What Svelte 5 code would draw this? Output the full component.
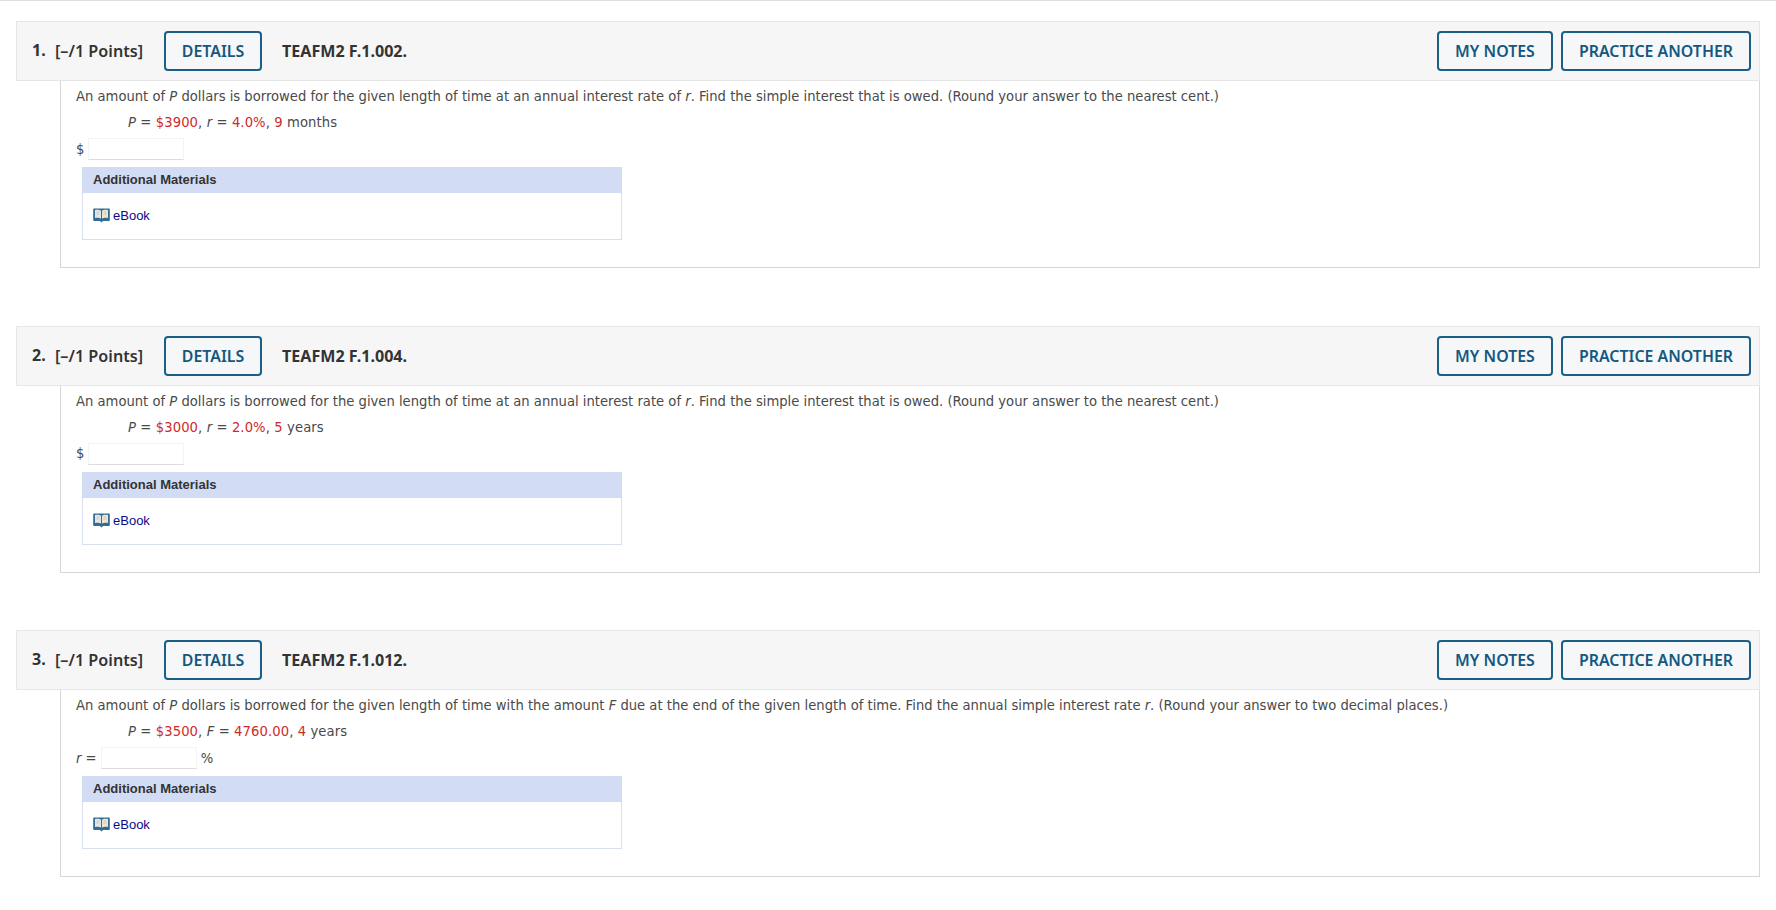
<script>
  // Three homework questions, same layout each
  const questions = [
    {
      num: 1,
      code: "TEAFM2 F.1.002.",
      kind: "interest",
      vals: ["$3900", "4.0%", "9"],
      unit: "months",
    },
    {
      num: 2,
      code: "TEAFM2 F.1.004.",
      kind: "interest",
      vals: ["$3000", "2.0%", "5"],
      unit: "years",
    },
    {
      num: 3,
      code: "TEAFM2 F.1.012.",
      kind: "rate",
      vals: ["$3500", "4760.00", "4"],
      unit: "years",
    },
  ];
</script>

<div class="page">
  {#each questions as q}
    <section class="question">
      <header class="head">
        <span class="num">{q.num}.</span>
        <span class="points">[–/1 Points]</span>
        <button class="btn details">DETAILS</button>
        <span class="code">{q.code}</span>
        <div class="spacer"></div>
        <button class="btn notes">MY NOTES</button>
        <button class="btn practice">PRACTICE ANOTHER</button>
      </header>

      <div class="body">
        {#if q.kind === "interest"}
          <p class="prompt">An amount of <i>P</i> dollars is borrowed for the given length of time at an annual interest rate of <i>r</i>. Find the simple interest that is owed. (Round your answer to the nearest cent.)</p>
          <p class="given"><i>P</i> = <span class="red">{q.vals[0]}</span>, <i>r</i> = <span class="red">{q.vals[1]}</span>, <span class="red">{q.vals[2]}</span> {q.unit}</p>
          <div class="answer"><span>$</span><input type="text" /></div>
        {:else}
          <p class="prompt">An amount of <i>P</i> dollars is borrowed for the given length of time with the amount <i>F</i> due at the end of the given length of time. Find the annual simple interest rate <i>r</i>. (Round your answer to two decimal places.)</p>
          <p class="given"><i>P</i> = <span class="red">{q.vals[0]}</span>, <i>F</i> = <span class="red">{q.vals[1]}</span>, <span class="red">{q.vals[2]}</span> {q.unit}</p>
          <div class="answer"><span><i>r</i> =</span><input type="text" /><span class="pct">%</span></div>
        {/if}

        <div class="materials">
          <div class="mat-title">Additional Materials</div>
          <div class="mat-body">
            <svg width="17" height="15" viewBox="0 0 17 15" aria-hidden="true">
              <path d="M1 .5h15a.8.8 0 0 1 .8.8v10.9a.8.8 0 0 1-.8.8H10l-1.5 1.6L7 13H1a.8.8 0 0 1-.8-.8V1.3A.8.8 0 0 1 1 .5z" fill="#356c94" />
              <path d="M2 2c2-.5 4.6-.3 6 .7v7.8C6.6 9.7 4 9.5 2 9.9z" fill="#dfe8ee" />
              <path d="M15 2c-2-.5-4.6-.3-6 .7v7.8c1.400-.8 4-1 6-.6z" fill="#efe6d0" />
              <path d="M3.500 4h3M3.500 6h3M10.500 4h3M10.500 6h3" stroke="#c9bfa8" stroke-width=".8" />
            </svg>
            <a href="#ebook">eBook</a>
          </div>
        </div>
      </div>
    </section>
  {/each}
</div>

<style>
  :global(body) {
    background: #fff;
  }

  .page {
    border-top: 1px solid #dedede;
    padding: 20px 16px 0;
    font-family: "DejaVu Sans", Verdana, sans-serif;
    color: #4a4a4a;
  }

  .question {
    margin-bottom: 57.5px;
  }

  .head {
    display: flex;
    align-items: center;
    height: 60px;
    box-sizing: border-box;
    background: #f6f6f6;
    border: 1px solid #e6e6e6;
    padding: 0 8px 0 15px;
    font-family: "Noto Sans", "Open Sans", sans-serif;
    font-weight: 700;
    font-size: 16px;
    color: #333;
  }

  .num {
    width: 23px;
    position: relative;
    top: -1px;
  }

  .points {
    width: 109px;
    font-weight: 600;
    font-size: 16.2px;
  }

  .btn {
    height: 40px;
    padding: 0;
    background: #f6f7f9;
    border: 2px solid #1b5e86;
    border-radius: 4px;
    font: 600 15.9px "Noto Sans", "Open Sans", sans-serif;
    color: #14587f;
    margin-left: 8px;
  }

  .details {
    margin-left: 0;
    width: 98px;
  }

  .notes {
    width: 116px;
  }

  .practice {
    width: 190px;
  }

  .code {
    margin-left: 20px;
    font-size: 16.1px;
  }

  .spacer {
    flex: 1;
  }

  .body {
    margin-left: 44px;
    height: 187px;
    box-sizing: border-box;
    border: 1px solid #d5d7db;
    border-top: 0;
    padding: 7px 14px 0 15px;
    font-size: 13.16px;
  }

  p {
    margin: 0;
  }

  .prompt {
    line-height: 17px;
  }

  .given {
    margin-top: 9px;
    padding-left: 52px;
    line-height: 17px;
    letter-spacing: 0.1px;
  }

  .red {
    color: #cf2a2a;
  }

  .answer {
    display: flex;
    align-items: center;
    gap: 4px;
    margin-top: 7px;
    height: 22px;
  }

  .answer input {
    width: 96px;
    height: 22px;
    box-sizing: border-box;
    border: 1px solid #f4f4f4;
    border-bottom: 1px solid #dcdcdc;
    background: #fff;
    padding: 0;
  }

  .materials {
    margin: 7px 0 0 6px;
    width: 540px;
    height: 73px;
    box-sizing: border-box;
    border: 1px solid #d8dff0;
    font-family: "Liberation Sans", Arial, sans-serif;
  }

  .mat-title {
    height: 26px;
    margin: -1px -1px 0;
    padding-left: 11px;
    background: #d2ddf5;
    font-size: 13px;
    font-weight: 700;
    line-height: 26px;
    color: #333;
  }

  .mat-body {
    display: flex;
    align-items: center;
    gap: 3px;
    padding: 15px 0 0 10px;
    font-size: 13px;
  }

  .mat-body a {
    color: #0a0a8c;
    text-decoration: none;
  }
</style>
